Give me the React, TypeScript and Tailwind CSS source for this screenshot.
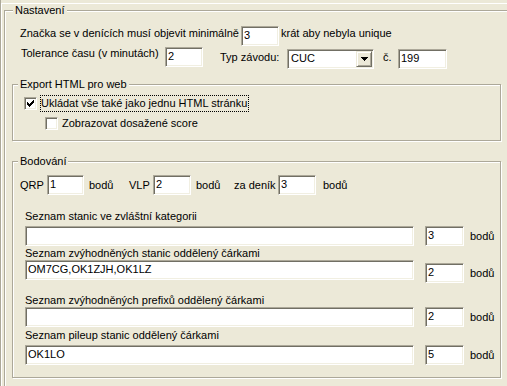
import React from 'react';

// classic sunken edit box
const Edit: React.FC<{ value?: string; className?: string }> = ({ value = '', className = '' }) => (
    <input
        readOnly
        value={value}
        className={`h-[20px] shrink-0 bg-white border border-t-[#ACA899] border-l-[#ACA899] border-r-white border-b-white shadow-[inset_1px_1px_0_#716F64,inset_-1px_-1px_0_#F1EFE2] pl-[2px] pb-[2px] text-[11px] text-black outline-none ${className}`}
    />
);

const CheckBox: React.FC<{ checked?: boolean }> = ({ checked }) => (
    <span className="w-[13px] h-[13px] shrink-0 bg-white border border-t-[#ACA899] border-l-[#ACA899] border-r-white border-b-white shadow-[inset_1px_1px_0_#716F64,inset_-1px_-1px_0_#F1EFE2] flex">
        {checked && (
            <svg width="11" height="11" viewBox="0 0 11 11" shapeRendering="crispEdges">
                <rect x="2" y="4" width="1" height="3" fill="#000" />
                <rect x="3" y="5" width="1" height="3" fill="#000" />
                <rect x="4" y="6" width="1" height="3" fill="#000" />
                <rect x="5" y="5" width="1" height="3" fill="#000" />
                <rect x="6" y="4" width="1" height="3" fill="#000" />
                <rect x="7" y="3" width="1" height="3" fill="#000" />
                <rect x="8" y="2" width="1" height="3" fill="#000" />
            </svg>
        )}
    </span>
);

const GroupBox: React.FC<{ title: string; className?: string; children: React.ReactNode }> = ({ title, className = '', children }) => (
    <div className={`relative border border-[#ACA899] shadow-[inset_1px_1px_0_#fff,1px_1px_0_#fff] ${className}`}>
        <span className="absolute top-[-7px] left-[5px] bg-[#ECE9D8] px-[2px] leading-[13px] whitespace-nowrap">{title}</span>
        {children}
    </div>
);

const App: React.FC = () => {
    const lists = [
        { label: 'Seznam stanic ve zvláštní kategorii', value: '', pts: '3', labelCls: 'mt-[15px]', rowCls: 'mt-[3px]', smallCls: '' },
        { label: 'Seznam zvýhodněných stanic oddělený čárkami', value: 'OM7CG,OK1ZJH,OK1LZ', pts: '2', labelCls: 'mt-[1px]', rowCls: 'mt-0', smallCls: 'mt-[3px]' },
        { label: 'Seznam zvýhodněných prefixů oddělený čárkami', value: '', pts: '2', labelCls: 'mt-[11px]', rowCls: 'mt-0', smallCls: '' },
        { label: 'Seznam pileup stanic oddělený čárkami', value: 'OK1LO', pts: '5', labelCls: 'mt-[2px]', rowCls: 'mt-[3px]', smallCls: '' },
    ];

    return (
        <div className="w-[507px] h-[386px] overflow-hidden bg-[#ECE9D8] border-l border-[#ACA899] font-['Liberation_Sans',Arial,sans-serif] text-[11px] leading-[13px] text-black">
            <div className="mt-[3px] h-full border-t border-l border-white">
                {/* Nastavení */}
                <div className="relative ml-[2px] mt-[6px] w-[540px] border border-[#ACA899] shadow-[inset_1px_1px_0_#fff,1px_1px_0_#fff] pl-[7px] pt-[15px] pb-[20px]">
                    <span className="absolute top-[-7px] left-[8px] bg-[#ECE9D8] px-[2px] leading-[13px]">Nastavení</span>

                    <div className="flex items-start pl-[8px] h-[20px]">
                        <span className="w-[221px] mt-[1px] whitespace-nowrap">Značka se v denících musí objevit minimálně</span>
                        <Edit value="3" className="w-[38px]" />
                        <span className="ml-[2px] mt-[1px] whitespace-nowrap">krát aby nebyla unique</span>
                    </div>

                    <div className="flex items-start pl-[9px] mt-[1px] h-[22px]">
                        <span className="w-[144px] whitespace-nowrap">Tolerance času (v minutách)</span>
                        <Edit value="2" className="w-[38px]" />
                        <span className="ml-[17px] w-[67px] mt-[4px] whitespace-nowrap">Typ závodu:</span>
                        <div className="mt-[2px] w-[87px] h-[20px] flex bg-white border border-t-[#ACA899] border-l-[#ACA899] border-r-white border-b-white shadow-[inset_1px_1px_0_#716F64,inset_-1px_-1px_0_#F1EFE2] p-[1px]">
                            <span className="flex-1 pl-[2px] pt-[1px]">CUC</span>
                            <span className="w-[16px] h-[16px] flex items-center justify-center bg-[#ECE9D8] border border-t-[#ECE9D8] border-l-[#ECE9D8] border-r-[#716F64] border-b-[#716F64] shadow-[inset_1px_1px_0_#fff,inset_-1px_-1px_0_#ACA899]">
                                <svg width="7" height="4" viewBox="0 0 7 4" shapeRendering="crispEdges">
                                    <path d="M0 0h7v1h-1v1h-1v1h-1v1h-1v-1h-1v-1h-1v-1h-1z" fill="#000" />
                                </svg>
                            </span>
                        </div>
                        <span className="ml-[9px] w-[15px] mt-[4px]">č.</span>
                        <Edit value="199" className="w-[49px] mt-[2px]" />
                    </div>

                    {/* Export HTML pro web */}
                    <GroupBox title="Export HTML pro web" className="mt-[15px] w-[489px] pl-[11px] pt-[10px] pb-[8px]">
                        <div className="flex items-center h-[17px]">
                            <CheckBox checked />
                            <span className="ml-[3px] h-[17px] border border-dotted border-black pr-[1px] leading-[15px] whitespace-nowrap">Ukládat vše také jako jednu HTML stránku</span>
                        </div>
                        <div className="flex items-center h-[17px] mt-[3px] pl-[21px]">
                            <CheckBox />
                            <span className="ml-[3px] h-[17px] border border-transparent leading-[15px] whitespace-nowrap">Zobrazovat dosažené score</span>
                        </div>
                    </GroupBox>

                    {/* Bodování */}
                    <GroupBox title="Bodování" className="mt-[20px] w-[489px] pl-[7px] pt-[13px] pb-[12px]">
                        <div className="flex items-center h-[20px]">
                            <span className="w-[27px]">QRP</span>
                            <Edit value="1" className="w-[37px]" />
                            <span className="ml-[5px] w-[40px]">bodů</span>
                            <span className="w-[24px]">VLP</span>
                            <Edit value="2" className="w-[38px]" />
                            <span className="ml-[5px] w-[38px]">bodů</span>
                            <span className="w-[44px] whitespace-nowrap">za deník</span>
                            <Edit value="3" className="w-[38px]" />
                            <span className="ml-[7px]">bodů</span>
                        </div>

                        {lists.map((item, i) => (
                            <div key={i} className="pl-[5px]">
                                <div className={`h-[13px] whitespace-nowrap ${item.labelCls}`}>{item.label}</div>
                                <div className={`flex items-start ${item.rowCls}`}>
                                    <Edit value={item.value} className="w-[389px]" />
                                    <Edit value={item.pts} className={`ml-[11px] w-[39px] ${item.smallCls}`} />
                                    <span className={`ml-[6px] self-center ${item.smallCls}`}>bodů</span>
                                </div>
                            </div>
                        ))}
                    </GroupBox>
                </div>
            </div>
        </div>
    );
};

export default App;
